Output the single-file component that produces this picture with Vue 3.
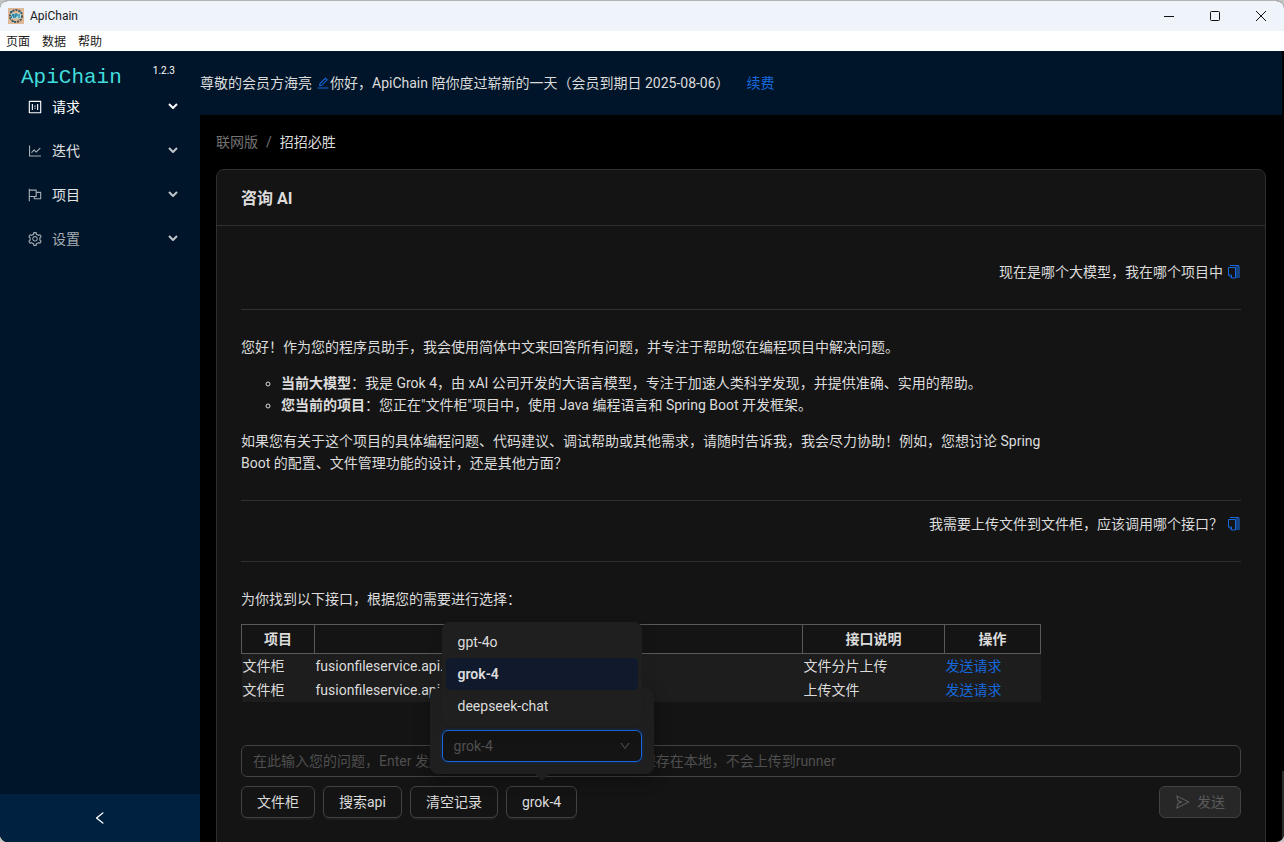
<script setup>
import { ref } from 'vue'

const icons = {
  edit: 'M257.7 752c2 0 4-.2 6-.5L431.9 722c2-.4 3.9-1.3 5.3-2.8l423.9-423.9a9.96 9.96 0 000-14.1L694.9 114.9c-1.9-1.9-4.4-2.9-7.1-2.9s-5.2 1-7.1 2.9L256.8 538.8c-1.5 1.5-2.4 3.3-2.8 5.3l-29.5 168.2a33.5 33.5 0 009.4 29.8c6.6 6.4 14.9 9.9 23.8 9.9zm67.4-174.4L687.8 215l73.3 73.3-362.7 362.6-88.9 15.7 15.6-89zM880 836H144c-17.7 0-32 14.3-32 32v36c0 4.4 3.6 8 8 8h784c4.4 0 8-3.6 8-8v-36c0-17.7-14.3-32-32-32z',
  chart: 'M888 792H200V168c0-4.4-3.6-8-8-8h-56c-4.4 0-8 3.6-8 8v688c0 4.4 3.6 8 8 8h752c4.4 0 8-3.6 8-8v-56c0-4.4-3.6-8-8-8zM305.8 637.7c3.1 3.1 8.1 3.1 11.3 0l138.3-137.6L583 628.5c3.1 3.1 8.2 3.1 11.3 0l275.4-275.3c3.1-3.1 3.1-8.2 0-11.3l-39.6-39.6a8.03 8.03 0 00-11.3 0l-230 229.9L461.4 404a8.03 8.03 0 00-11.3 0L266.3 586.7a8.03 8.03 0 000 11.3l39.5 39.7z',
  flag: 'M880 305H624V192c0-17.7-14.3-32-32-32H184v-40c0-4.4-3.6-8-8-8h-56c-4.4 0-8 3.6-8 8v784c0 4.4 3.6 8 8 8h56c4.4 0 8-3.6 8-8V640h248v113c0 17.7 14.3 32 32 32h416c17.7 0 32-14.3 32-32V337c0-17.7-14.3-32-32-32zM184 568V232h368v336H184zm656 145H504v-73h112c4.4 0 8-3.6 8-8V377h216v336z',
  request: 'M880 112H144c-17.7 0-32 14.3-32 32v736c0 17.7 14.3 32 32 32h736c17.7 0 32-14.3 32-32V144c0-17.7-14.3-32-32-32zm-40 728H184V184h656v656zM316 320h56c4.400 0 8 3.600 8 8v368c0 4.400-3.600 8-8 8h-56c-4.400 0-8-3.600-8-8V328c0-4.400 3.600-8 8-8zM652 320h56c4.400 0 8 3.600 8 8v368c0 4.400-3.600 8-8 8h-56c-4.400 0-8-3.600-8-8V328c0-4.400 3.600-8 8-8zM476 420h72v72h-72zM476 556h72v72h-72z',
  setting: 'M924.8 625.7l-65.5-56c3.1-19 4.7-38.4 4.7-57.8s-1.6-38.8-4.7-57.8l65.5-56a32.03 32.03 0 009.3-35.2l-.9-2.6a443.74 443.74 0 00-79.7-137.9l-1.8-2.1a32.12 32.12 0 00-35.1-9.5l-81.3 28.9c-30-24.6-63.5-44-99.7-57.6l-15.7-85a32.05 32.05 0 00-25.8-25.7l-2.7-.5c-52.1-9.4-106.9-9.4-159 0l-2.7.5a32.05 32.05 0 00-25.8 25.7l-15.8 85.4a351.86 351.86 0 00-99 57.4l-81.9-29.1a32 32 0 00-35.1 9.5l-1.8 2.1a446.02 446.02 0 00-79.7 137.9l-.9 2.6c-4.5 12.5-.8 26.5 9.3 35.2l66.3 56.6c-3.1 18.8-4.6 38-4.6 57.1 0 19.2 1.5 38.4 4.6 57.1L99 625.5a32.03 32.03 0 00-9.3 35.2l.9 2.6c18.1 50.4 44.9 96.9 79.7 137.9l1.8 2.1a32.12 32.12 0 0035.1 9.5l81.9-29.1c29.8 24.5 63.1 43.900 99 57.4l15.8 85.4a32.05 32.05 0 0025.8 25.7l2.7.5a449.4 449.4 0 00159 0l2.7-.5a32.05 32.05 0 0025.8-25.7l15.7-85a350 350 0 0099.7-57.6l81.3 28.9a32 32 0 0035.1-9.5l1.8-2.1c34.8-41.1 61.6-87.5 79.7-137.9l.9-2.6c4.5-12.3.8-26.3-9.3-35zM788.3 465.9c2.5 15.1 3.8 30.6 3.8 46.1s-1.3 31-3.8 46.1l-6.6 40.1 74.7 63.9a370.03 370.03 0 01-42.6 73.6L721 702.8l-31.4 25.8c-23.9 19.6-50.5 35-79.3 45.8l-38.1 14.3-17.9 97a377.5 377.5 0 01-85 0l-17.9-97.2-37.8-14.5c-28.5-10.8-55-26.2-78.7-45.7l-31.4-25.9-93.4 33.2c-17-22.9-31.2-47.6-42.6-73.6l75.5-64.5-6.5-40c-2.4-14.9-3.7-30.3-3.7-45.5 0-15.3 1.2-30.6 3.7-45.5l6.5-40-75.5-64.5c11.3-26.1 25.6-50.7 42.6-73.6l93.4 33.2 31.4-25.9c23.7-19.5 50.2-34.9 78.7-45.7l37.9-14.3 17.9-97.2c28.1-3.2 56.8-3.2 85 0l17.9 97 38.1 14.3c28.7 10.8 55.4 26.2 79.3 45.8l31.4 25.8 92.8-32.9c17 22.9 31.2 47.6 42.6 73.6L781.8 426l6.5 39.9zM512 326c-97.2 0-176 78.8-176 176s78.8 176 176 176 176-78.8 176-176-78.8-176-176-176zm79.2 255.2A111.6 111.6 0 01512 614c-29.9 0-58-11.7-79.2-32.8A111.6 111.6 0 01400 502c0-29.9 11.7-58 32.8-79.2C454 401.6 482.1 390 512 390c29.9 0 58 11.6 79.2 32.8A111.6 111.6 0 01624 502c0 29.9-11.7 58-32.8 79.2z',
  down: 'M884 256h-75c-5.1 0-9.9 2.5-12.9 6.6L512 654.2 227.9 262.6c-3-4.1-7.8-6.6-12.9-6.6h-75c-6.5 0-10.3 7.4-6.5 12.7l352.6 486.1c12.8 17.6 39 17.6 51.7 0l352.6-486.1c3.9-5.3.1-12.7-6.4-12.7z',
  left: 'M724 218.3V141c0-6.7-7.7-10.4-12.9-6.3L260.3 486.8a31.86 31.86 0 000 50.3l450.8 352.1c5.3 4.1 12.9.4 12.9-6.3v-77.3c0-4.9-2.3-9.6-6.1-12.6l-360-281 360-281.1c3.8-3 6.1-7.7 6.1-12.6z',
  send: 'M931.4 498.9L94.9 79.5c-3.4-1.7-7.3-2.1-11-1.2a15.99 15.99 0 00-11.7 19.3l86.2 352.2c1.3 5.3 5.2 9.6 10.4 11.3l147.7 50.7-147.6 50.7c-5.2 1.8-9.1 6-10.3 11.3L72.2 926.5c-.9 3.7-.5 7.6 1.2 10.9 3.9 7.9 13.5 11.1 21.5 7.2l836.5-417c3.1-1.5 5.6-4.1 7.2-7.1 3.9-8 .7-17.6-7.2-21.6zM170.8 826.3l50.3-205.6 295.2-101.3c2.3-.8 4.2-2.6 5-5 1.4-4.2-.8-8.7-5-10.2L221.1 403 171 198.2l628 314.9-628.2 313.2z'
}

const menu = [
  { label: '请求', icon: 'request', tone: 'active' },
  { label: '迭代', icon: 'chart', tone: 'bright' },
  { label: '项目', icon: 'flag', tone: 'bright' },
  { label: '设置', icon: 'setting', tone: '' }
]
const models = ['gpt-4o', 'grok-4', 'deepseek-chat']
const model = ref('grok-4')
const question = ref('')
const rows = [
  { project: '文件柜', api: 'fusionfileservice.api.M', note: '文件分片上传' },
  { project: '文件柜', api: 'fusionfileservice.api.F', note: '上传文件' }
]
</script>

<template>
  <div class="window">
    <header class="titlebar">
      <svg class="app-icon" viewBox="0 0 16 16" aria-hidden="true">
        <rect width="16" height="16" fill="#dfb896" />
        <circle cx="8" cy="8" r="6" fill="none" stroke="#4c5558" stroke-width="2" stroke-dasharray="2 1" />
        <path d="M3 5.500h10v5H3z" fill="#a5dde0" />
        <path d="M3 10l2-4 1 4M7 10V6h2v2H7M11 6v4M2 4l3-1M11 3l3 2M4 13l3 1" fill="none" stroke="#146c94" />
      </svg>
      <span class="app-name">ApiChain</span>
      <div class="controls">
        <button type="button" aria-label="最小化"><svg viewBox="0 0 12 12"><path d="M1 6.500h10" /></svg></button>
        <button type="button" aria-label="最大化"><svg viewBox="0 0 12 12"><rect x="1.500" y="1.500" width="9" height="9" rx="1" /></svg></button>
        <button type="button" aria-label="关闭"><svg viewBox="0 0 12 12"><path d="M1 1l10 10M11 1L1 11" /></svg></button>
      </div>
    </header>
    <nav class="menubar">
      <button type="button">页面</button>
      <button type="button">数据</button>
      <button type="button">帮助</button>
    </nav>

    <div class="app">
      <aside class="sider">
        <div class="brand"><span class="logo">ApiChain</span><span class="version">1.2.3</span></div>
        <ul class="menu">
          <li v-for="item in menu" :key="item.label">
            <button type="button" class="menu-item" :class="item.tone">
              <svg class="icon" viewBox="0 0 1024 1024"><path :d="icons[item.icon]" /></svg>
              <span class="menu-label">{{ item.label }}</span>
              <svg class="chevron" viewBox="0 0 10 6"><path d="M1 1l4 4 4-4" /></svg>
            </button>
          </li>
        </ul>
        <button type="button" class="trigger" aria-label="收起菜单">
          <svg class="icon" viewBox="0 0 1024 1024"><path :d="icons.left" /></svg>
        </button>
      </aside>

      <div class="page">
        <header class="topbar">
          <span>尊敬的会员方海亮</span>
          <a href="#" class="edit" aria-label="修改昵称"><svg class="icon" viewBox="0 0 1024 1024"><path :d="icons.edit" /></svg></a>
          <span>你好，ApiChain 陪你度过崭新的一天（会员到期日 2025-08-06）</span>
          <a href="#" class="renew">续费</a>
        </header>

        <main class="content">
          <nav class="breadcrumb">
            <span>联网版</span><span>/</span><span class="current">招招必胜</span>
          </nav>

          <section class="card">
            <h1 class="card-title">咨询 AI</h1>
            <div class="card-body">
              <div class="ask">
                <span>现在是哪个大模型，我在哪个项目中</span>
                <a href="#" aria-label="复制"><svg class="copy" viewBox="0 0 14 14"><path class="back" d="M9 1h4v12H9z" /><path class="sheet" d="M1.500 2.500h7v10.500h-4l-3-3z" /><path class="line" d="M3 .5h9M1.500 10h3v3" /></svg></a>
              </div>
              <div class="answer">
                <p>您好！作为您的程序员助手，我会使用简体中文来回答所有问题，并专注于帮助您在编程项目中解决问题。</p>
                <ul>
                  <li><strong>当前大模型</strong>：我是 Grok 4，由 xAI 公司开发的大语言模型，专注于加速人类科学发现，并提供准确、实用的帮助。</li>
                  <li><strong>您当前的项目</strong>：您正在"文件柜"项目中，使用 Java 编程语言和 Spring Boot 开发框架。</li>
                </ul>
                <p>如果您有关于这个项目的具体编程问题、代码建议、调试帮助或其他需求，请随时告诉我，我会尽力协助！例如，您想讨论 Spring Boot 的配置、文件管理功能的设计，还是其他方面？</p>
              </div>
              <div class="ask">
                <span>我需要上传文件到文件柜，应该调用哪个接口？</span>
                <a href="#" aria-label="复制"><svg class="copy" viewBox="0 0 14 14"><path class="back" d="M9 1h4v12H9z" /><path class="sheet" d="M1.500 2.500h7v10.500h-4l-3-3z" /><path class="line" d="M3 .5h9M1.500 10h3v3" /></svg></a>
              </div>
              <div class="answer last">
                <p>为你找到以下接口，根据您的需要进行选择：</p>
                <table>
                  <colgroup><col class="c-project"><col><col class="c-note"><col class="c-action"></colgroup>
                  <thead>
                    <tr><th>项目</th><th>接口</th><th>接口说明</th><th>操作</th></tr>
                  </thead>
                  <tbody>
                    <tr v-for="row in rows" :key="row.api">
                      <td>{{ row.project }}</td>
                      <td>{{ row.api }}</td>
                      <td>{{ row.note }}</td>
                      <td><a href="#">发送请求</a></td>
                    </tr>
                  </tbody>
                </table>
              </div>

              <input v-model="question" class="question" type="text" aria-label="您的问题" placeholder="在此输入您的问题，Enter 发送，Shift+Enter 换行，聊天记录只保存在本地，不会上传到runner">

              <div class="actions">
                <button type="button" class="btn">文件柜</button>
                <button type="button" class="btn">搜索api</button>
                <button type="button" class="btn">清空记录</button>
                <div class="model">
                  <button type="button" class="btn">{{ model }}</button>
                  <div class="popover">
                    <div class="select-wrap">
                      <ul class="options" role="listbox" aria-label="模型列表">
                        <li v-for="name in models" :key="name" role="option" :aria-selected="name === model" :class="{ selected: name === model }" @click="model = name">{{ name }}</li>
                      </ul>
                      <select v-model="model" aria-label="模型">
                        <option v-for="name in models" :key="name">{{ name }}</option>
                      </select>
                      <svg class="caret" viewBox="0 0 1024 1024"><path :d="icons.down" /></svg>
                    </div>
                  </div>
                </div>
                <button type="button" class="btn send" disabled>
                  <svg class="icon" viewBox="0 0 1024 1024"><path :d="icons.send" /></svg>发送
                </button>
              </div>
            </div>
          </section>
        </main>
      </div>
      <div class="scroll"><div class="thumb"></div></div>
    </div>
  </div>
</template>

<style>
body {
  margin: 0;
  background: #c4c4c4;
}
</style>

<style scoped>
* {
  box-sizing: border-box;
}
.window {
  display: flex;
  flex-direction: column;
  height: 100vh;
  overflow: hidden;
  border-top: 1px solid #b4b4b4;
  border-radius: 8px;
  background: #000;
  color: #dcdcdc;
  font: 14px/22px Roboto, "Noto Sans CJK SC", sans-serif;
}
button, input, select {
  font: inherit;
  color: inherit;
}
button {
  cursor: pointer;
}
a {
  color: #1668dc;
  text-decoration: none;
}
ul {
  margin: 0;
  padding: 0;
  list-style: none;
}
.icon {
  width: 16px;
  height: 16px;
  fill: currentColor;
  flex: none;
}

.titlebar {
  display: flex;
  align-items: center;
  flex: none;
  height: 30px;
  padding-left: 8px;
  background: #eff3fa;
  color: #1a1a1a;
  font-size: 12px;
}
.app-icon {
  width: 16px;
  height: 16px;
  margin-right: 6px;
}
.controls {
  display: flex;
  margin-left: auto;
}
.controls button {
  display: flex;
  align-items: center;
  justify-content: center;
  width: 46px;
  height: 30px;
  padding: 0;
  border: 0;
  background: none;
}
.controls svg {
  width: 12px;
  height: 12px;
  fill: none;
  stroke: #111;
}
.menubar {
  display: flex;
  align-items: flex-end;
  flex: none;
  gap: 12px;
  height: 20px;
  padding-left: 6px;
  background: #fff;
  color: #1a1a1a;
  font-size: 12px;
}
.menubar button {
  padding: 0;
  border: 0;
  background: none;
  line-height: 18px;
}

.app {
  display: flex;
  flex: 1;
  min-height: 0;
}
.sider {
  display: flex;
  flex-direction: column;
  flex: none;
  width: 200px;
  background: #001529;
}
.brand {
  display: flex;
  align-items: flex-start;
  justify-content: space-between;
  height: 34px;
  padding: 9px 25px 0 21px;
}
.logo {
  color: #41dcdc;
  font: 21px/36px "Liberation Mono", monospace;
}
.version {
  color: #fff;
  font-size: 10px;
}
.menu-item {
  display: flex;
  align-items: center;
  width: 100%;
  height: 44px;
  padding: 0 22px 0 27px;
  border: 0;
  background: none;
  color: #a6adb4;
}
.menu-item.bright .menu-label {
  color: #e2e4e6;
}
.menu-item.active {
  color: #fff;
}
.menu-label {
  margin-left: 9px;
}
.chevron {
  width: 10px;
  height: 6px;
  margin-bottom: 2px;
  margin-left: auto;
  fill: none;
  stroke: #c0c5ca;
  stroke-width: 2;
}
.active .chevron {
  stroke: #fff;
}
.trigger {
  display: flex;
  align-items: center;
  justify-content: center;
  height: 48px;
  margin-top: auto;
  padding: 0;
  border: 0;
  background: #002140;
  color: #fff;
}

.page {
  display: flex;
  flex-direction: column;
  flex: 1;
  min-width: 0;
}
.topbar {
  display: flex;
  align-items: center;
  flex: none;
  height: 64px;
  background: #001529;
}
.edit {
  display: flex;
  margin-left: 4px;
}
.edit .icon {
  width: 14px;
  height: 14px;
}
.renew {
  margin-left: 17px;
}
.content {
  flex: 1;
  min-height: 0;
  padding: 16px;
  overflow: hidden;
}
.breadcrumb {
  display: flex;
  gap: 8px;
  margin-bottom: 16px;
  color: #737373;
}
.current {
  color: #dcdcdc;
}
.card {
  border: 1px solid #303030;
  border-radius: 8px;
  background: #141414;
}
.card-title {
  margin: 0;
  padding: 3px 24px 0;
  border-bottom: 1px solid #303030;
  font-size: 16px;
  line-height: 52px;
}
.card-body {
  padding: 23px 24px 32px;
}
.ask {
  display: flex;
  align-items: center;
  justify-content: flex-end;
  gap: 4px;
  padding: 12px 0 26px;
  border-bottom: 1px solid #303030;
}
.ask a {
  display: flex;
}
.copy {
  width: 14px;
  height: 14px;
}
.copy .back {
  fill: #15417e;
}
.copy .sheet {
  fill: #141414;
  stroke: #1668dc;
}
.copy .line {
  fill: none;
  stroke: #1668dc;
}
.answer {
  padding: 26px 0;
  border-bottom: 1px solid #303030;
}
.answer.last {
  padding-bottom: 43px;
  border: 0;
}
.answer p {
  max-width: 808px;
  margin: 0;
}
.answer ul {
  margin: 14px 0;
  padding-left: 40px;
  list-style: circle;
}
table {
  width: 80%;
  margin-top: 14px;
  border-collapse: collapse;
  table-layout: fixed;
}
.c-project {
  width: 73px;
}
.c-note {
  width: 142px;
}
.c-action {
  width: 96px;
}
th {
  height: 29px;
  padding: 0;
  border: 1px solid #595959;
}
td {
  padding: 1px;
  background: #1d1d1d;
  white-space: nowrap;
}
.question {
  display: block;
  width: 100%;
  height: 32px;
  padding: 0 11px;
  border: 1px solid #424242;
  border-radius: 6px;
  background: #141414;
}
.question::placeholder {
  color: #4f4f4f;
}
.actions {
  display: flex;
  gap: 8px;
  margin-top: 9px;
}
.btn {
  display: flex;
  align-items: center;
  gap: 6px;
  height: 32px;
  padding: 0 15px;
  border: 1px solid #424242;
  border-radius: 6px;
  background: #141414;
  box-shadow: 0 2px 0 rgba(255, 255, 255, 0.04);
}
.send {
  margin-left: auto;
  background: #272727;
  color: #5a5a5a;
  box-shadow: none;
}
.model {
  position: relative;
}
.popover {
  position: absolute;
  bottom: calc(100% + 12px);
  left: 50%;
  width: 224px;
  margin-left: -112px;
  padding: 42px 12px 12px;
  border-radius: 8px;
  background: #1f1f1f;
  box-shadow: 0 6px 16px rgba(0, 0, 0, 0.3);
}
.popover::after {
  content: "";
  position: absolute;
  top: 100%;
  left: 50%;
  margin-left: -7px;
  border: 7px solid transparent;
  border-top-color: #1f1f1f;
  border-bottom: 0;
}
.select-wrap {
  position: relative;
}
select {
  display: block;
  width: 100%;
  height: 32px;
  padding: 0 11px;
  border: 1px solid #1668dc;
  border-radius: 6px;
  outline: 0;
  appearance: none;
  background: #141414;
  color: #4f4f4f;
  box-shadow: 0 0 0 2px rgba(0, 60, 180, 0.15);
}
.caret {
  position: absolute;
  top: 10px;
  right: 11px;
  width: 12px;
  height: 12px;
  fill: #4f4f4f;
  pointer-events: none;
}
.options {
  position: absolute;
  right: 0;
  bottom: calc(100% + 4px);
  left: 0;
  padding: 4px;
  border-radius: 8px;
  background: #1f1f1f;
  box-shadow: 0 6px 16px rgba(0, 0, 0, 0.08);
}
.options li {
  padding: 5px 12px;
  border-radius: 4px;
}
.options .selected {
  background: #111a2c;
  font-weight: 600;
}
.scroll {
  display: flex;
  flex-direction: column;
  justify-content: flex-end;
  flex: none;
  width: 2px;
}
.thumb {
  height: 9%;
  background: #2c2c2a;
}
</style>
